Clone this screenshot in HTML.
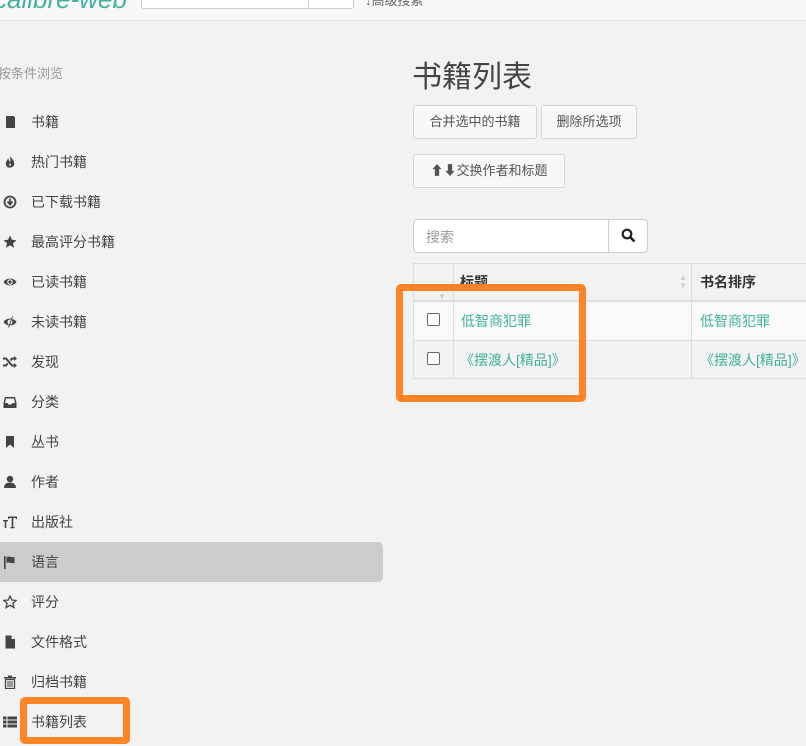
<!DOCTYPE html><html><head><meta charset="utf-8"><style>
*{margin:0;padding:0;box-sizing:border-box}
body{width:806px;height:746px;overflow:hidden;background:#f2f2f2;font-family:"Liberation Sans","Noto Sans CJK SC",sans-serif;font-size:14px;color:#444;position:relative}
.a{position:absolute}
.hdr{left:0;top:0;width:806px;height:21px;background:#f8f8f8;border-bottom:1px solid #e2e2e2}
.it{position:absolute;left:31px;font-size:14px;color:#444;line-height:20px}
.ic{position:absolute;left:3px;width:14px;height:14px}
.btn{position:absolute;height:34px;background:#f8f8f8;border:1px solid #d5d5d5;border-radius:3px;font-size:13px;color:#555;line-height:32px;text-align:center}
.ob{position:absolute;border:7px solid #ff8427;border-radius:5px}
td,th{border:1px solid #ddd}
.lk{color:#45b29d}
</style></head><body>
<div class="a hdr"></div>
<div class="a" style="left:-6px;top:-16px;font-size:26px;color:#45b29d;font-style:italic">calibre-web</div>
<div class="a" style="left:141px;top:-5px;width:213px;height:14px;background:#fff;border:1px solid #ccc;border-radius:3px"></div>
<div class="a" style="left:308px;top:-5px;width:1px;height:14px;background:#ccc"></div>
<div class="a" style="left:365px;top:-10px;font-size:13px;color:#666">↓高级搜索</div>

<div class="a" style="left:-2px;top:63px;font-size:13px;color:#999">按条件浏览</div>
<div class="a" style="left:0;top:542px;width:383px;height:40px;background:#ccc;border-radius:0 5px 5px 0"></div>

<svg class="ic" style="top:115px" viewBox="0 0 14 14"><path d="M3 1h8v12H3z" fill="#444"/><path d="M11 2h1v11h-8v-1h7z" fill="#444"/></svg><div class="it" style="top:112px">书籍</div>
<svg class="ic" style="top:155px" viewBox="0 0 14 14"><path d="M7 1C9 4 12 6 11 10c-1 3-7 4-8 0-1-3 2-5 2-7 1 2 1 3 2 4 1-2 0-4 0-6z" fill="#444"/><path d="M7 8c1 1 1 3 0 3-1 0-1-2 0-3z" fill="#f2f2f2"/></svg><div class="it" style="top:152px">热门书籍</div>
<svg class="ic" style="top:195px" viewBox="0 0 14 14"><circle cx="7" cy="7" r="5.5" fill="none" stroke="#444" stroke-width="1.8"/><path d="M7 3.5v5M4.5 6.5L7 9.5 9.5 6.5" fill="none" stroke="#444" stroke-width="1.8"/></svg><div class="it" style="top:192px">已下载书籍</div>
<svg class="ic" style="top:235px" viewBox="0 0 14 14"><path d="M7 0.5l1.9 4.3 4.6.4-3.5 3 1.1 4.6L7 10.4 2.9 12.8 4 8.2 0.5 5.2l4.6-.4z" fill="#444"/></svg><div class="it" style="top:232px">最高评分书籍</div>
<svg class="ic" style="top:275px" viewBox="0 0 14 14"><path d="M0.5 7C3 2.5 11 2.5 13.5 7 11 11.5 3 11.5 0.5 7z" fill="#444"/><circle cx="7" cy="7" r="2.8" fill="#f2f2f2"/><circle cx="7" cy="7" r="1.6" fill="#444"/></svg><div class="it" style="top:272px">已读书籍</div>
<svg class="ic" style="top:315px" viewBox="0 0 14 14"><path d="M0.5 7C3 2.5 11 2.5 13.5 7 11 11.5 3 11.5 0.5 7z" fill="#444"/><circle cx="7" cy="7" r="2.5" fill="#f2f2f2"/><path d="M10 1L5 13" stroke="#f2f2f2" stroke-width="1.5"/><path d="M9.5 1.5L5.5 12.5" stroke="#444" stroke-width="1"/></svg><div class="it" style="top:312px">未读书籍</div>
<svg class="ic" style="top:355px" viewBox="0 0 14 14"><path d="M0 3.5h3l6 7h3M0 10.5h3l1.8-2.1M7.5 5.5l1.5-2h3" fill="none" stroke="#444" stroke-width="2"/><path d="M11 1l3 2.5-3 2.5zM11 8l3 2.5-3 2.5z" fill="#444"/></svg><div class="it" style="top:352px">发现</div>
<svg class="ic" style="top:395px" viewBox="0 0 14 14"><path d="M2 2h10l1.5 6v5h-13V8z" fill="#444"/><path d="M3 3.5h8l1 4.5H9.5l-1 1.5h-3l-1-1.5H2z" fill="#f2f2f2"/></svg><div class="it" style="top:392px">分类</div>
<svg class="ic" style="top:435px" viewBox="0 0 14 14"><path d="M3 1h8v12L7 9.5 3 13z" fill="#444"/></svg><div class="it" style="top:432px">丛书</div>
<svg class="ic" style="top:475px" viewBox="0 0 14 14"><circle cx="7" cy="4" r="3.2" fill="#444"/><path d="M1 13c0-4 3-5.5 6-5.5s6 1.5 6 5.5z" fill="#444"/></svg><div class="it" style="top:472px">作者</div>
<svg class="ic" style="top:515px" viewBox="0 0 14 14"><path d="M5 1.5h9v2.5h-1.2V3H10.3v9h1.2v1.2H7.5V12h1.2V3H6.3v1H5z" fill="#444"/><path d="M0 5h5v1.4H3.3v6.6H1.7V6.4H0z" fill="#444"/></svg><div class="it" style="top:512px">出版社</div>
<svg class="ic" style="top:555px" viewBox="0 0 14 14"><rect x="1" y="1" width="1.6" height="13" fill="#444"/><path d="M3.5 2c3-1.5 4.5 1 8 0v6c-3.5 1-5-1.5-8 0z" fill="#444"/></svg><div class="it" style="top:552px">语言</div>
<svg class="ic" style="top:595px" viewBox="0 0 14 14"><path d="M7 1l1.8 4 4.4.4-3.3 2.9 1 4.3L7 10.3 3.1 12.6l1-4.3L0.8 5.4l4.4-.4z" fill="none" stroke="#444" stroke-width="1.3"/></svg><div class="it" style="top:592px">评分</div>
<svg class="ic" style="top:635px" viewBox="0 0 14 14"><path d="M2.5 0.5h6l3.5 3.5v9.5h-9.5z" fill="#444"/><path d="M8.5 0.5v3.5H12" fill="#f2f2f2"/></svg><div class="it" style="top:632px">文件格式</div>
<svg class="ic" style="top:675px" viewBox="0 0 14 14"><path d="M5 0.5h4v1.5h4v1.5H1V2h4z" fill="#444"/><path d="M2.5 4.5h9v9h-9z" fill="none" stroke="#444" stroke-width="1.3"/><path d="M5 6v6M7 6v6M9 6v6" stroke="#444" stroke-width="1"/></svg><div class="it" style="top:672px">归档书籍</div>
<svg class="ic" style="top:715px" viewBox="0 0 14 14"><path d="M0 1.5h3.5v3H0zM0 5.5h3.5v3H0zM0 9.5h3.5v3H0zM4.5 1.5H14v3H4.5zM4.5 5.5H14v3H4.5zM4.5 9.5H14v3H4.5z" fill="#444"/></svg><div class="it" style="top:712px">书籍列表</div>

<div class="a" style="left:412px;top:58px;font-size:30px;color:#444;line-height:40px">书籍列表</div>
<div class="btn" style="left:413px;top:105px;width:124px">合并选中的书籍</div>
<div class="btn" style="left:541px;top:105px;width:96px">删除所选项</div>
<div class="btn" style="left:413px;top:154px;width:152px">⬆⬇交换作者和标题</div>

<div class="a" style="left:413px;top:219px;width:235px;height:34px;background:#fff;border:1px solid #ccc;border-radius:4px"></div>
<div class="a" style="left:608px;top:219px;width:1px;height:34px;background:#ccc"></div>
<div class="a" style="left:426px;top:227px;font-size:14px;color:#999">搜索</div>
<svg class="a" style="left:621px;top:228px" width="15" height="15" viewBox="0 0 15 15"><circle cx="6" cy="6" r="4.3" fill="none" stroke="#222" stroke-width="2.2"/><path d="M9 9l4.5 4.5" stroke="#222" stroke-width="2.6"/></svg>

<table class="a" style="left:413px;top:263px;border-collapse:collapse;width:420px">
<tr style="height:37px;border-bottom:2px solid #ddd"><th style="width:40px;position:relative"><span style="position:absolute;left:24px;top:28px;font-size:8px;color:#ccc">▼</span></th><th style="width:238px;text-align:left;padding-left:6px;font-size:14px;color:#333;position:relative">标题<span style="position:absolute;right:4px;top:10px;font-size:8px;color:#ccc;line-height:8px">▲<br>▼</span></th><th style="text-align:left;padding-left:8px;font-size:14px;color:#333">书名排序</th></tr>
<tr style="height:40px;background:#f9f9f9"><td style="text-align:center"><span style="display:inline-block;width:13px;height:13px;border:1px solid #666;border-radius:2px;background:#fff"></span></td><td class="lk" style="padding-left:7px">低智商犯罪</td><td class="lk" style="padding-left:8px">低智商犯罪</td></tr>
<tr style="height:38px"><td style="text-align:center"><span style="display:inline-block;width:13px;height:13px;border:1px solid #666;border-radius:2px;background:#fff"></span></td><td class="lk" style="padding-left:6px">《摆渡人[精品]》</td><td class="lk" style="padding-left:8px">《摆渡人[精品]》</td></tr>
</table>

<div class="ob" style="left:396px;top:284px;width:190px;height:118px"></div>
<div class="ob" style="left:20px;top:697px;width:110px;height:47px"></div>
</body></html>
